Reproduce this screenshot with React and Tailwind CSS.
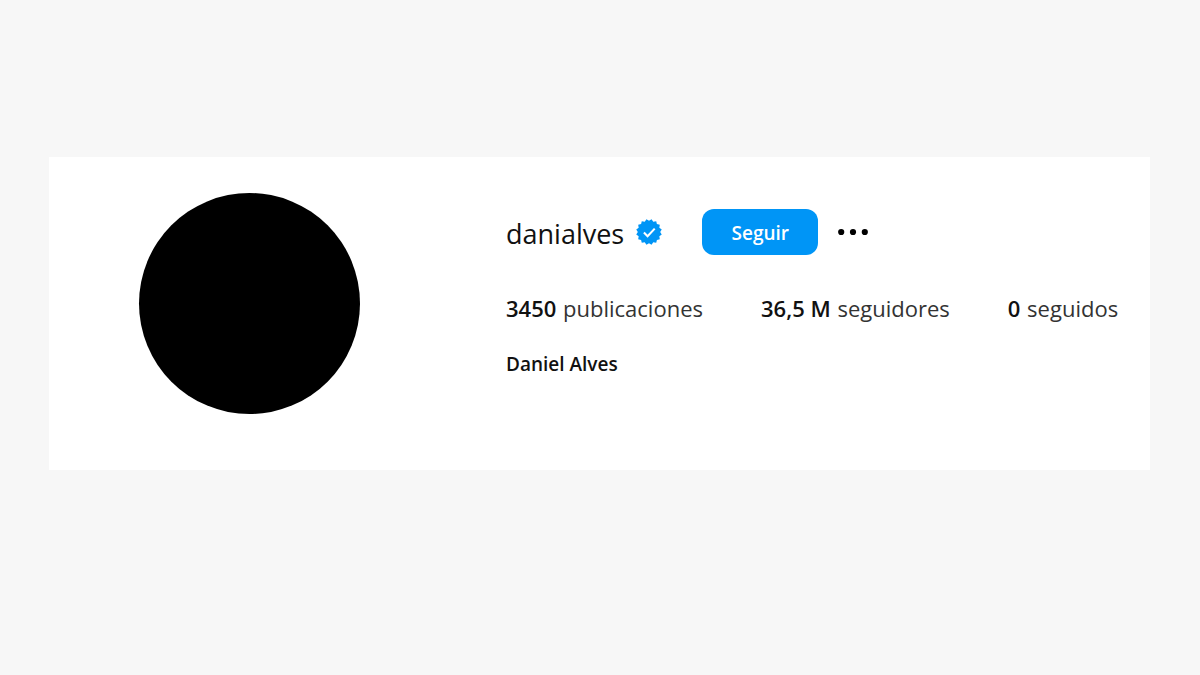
import React from "react";

const stats = [
  { value: "3450", label: "publicaciones" },
  { value: "36,5 M", label: "seguidores" },
  { value: "0", label: "seguidos" },
];

// Sixteen-point seal with a notch at the top; even steps are notches.
const sealPoints = Array.from({ length: 32 }, (_, i) => {
  const angle = (i * Math.PI) / 16;
  const radius = i % 2 === 0 ? 17.2 : 20;
  return `${(20 + radius * Math.sin(angle)).toFixed(2)},${(20 - radius * Math.cos(angle)).toFixed(2)}`;
}).join(" ");

function VerifiedBadge() {
  return (
    <svg
      className="ml-3 size-[26px] shrink-0"
      viewBox="0 0 40 40"
      role="img"
      aria-label="Verificado"
    >
      <polygon points={sealPoints} fill="#0095f6" />
      <path d="m12.2 20.8 5.6 5.6 11-11.6" fill="none" stroke="#fff" strokeWidth="3.2" />
    </svg>
  );
}

function MoreIcon() {
  return (
    <svg className="h-2 w-[30px]" viewBox="0 0 30 8" fill="#000" aria-hidden="true">
      <circle cx="3.2" cy="4" r="3.1" />
      <circle cx="15" cy="4" r="3.1" />
      <circle cx="26.8" cy="4" r="3.1" />
    </svg>
  );
}

export default function App() {
  return (
    <div className="min-h-screen bg-[#f7f7f7] pt-[157px] pr-[50px] pb-[157px] pl-[49px] font-['Open_Sans','Noto_Sans',sans-serif]">
      <main className="flex bg-white pt-9 pb-14 pl-[90px]">
        <div className="size-[221px] shrink-0 rounded-full bg-black" />
        <section className="ml-[146px] flex min-w-0 flex-col items-start pt-4">
          <div className="flex h-[46px] items-center">
            <h1 className="pt-[3px] text-[27px] leading-9 text-[#111]">danialves</h1>
            <VerifiedBadge />
            <button
              type="button"
              className="ml-10 h-[46px] w-[116px] rounded-xl bg-[#0095f6] pt-0.5 text-[19px] font-semibold text-white"
            >
              Seguir
            </button>
            <button
              type="button"
              aria-label="Más opciones"
              className="ml-5 flex h-[46px] items-center"
            >
              <MoreIcon />
            </button>
          </div>
          <ul className="mt-[37px] flex gap-[58px] text-[22px] leading-8 whitespace-nowrap text-[#333]">
            {stats.map(({ value, label }) => (
              <li key={label}>
                <span className="mr-px font-semibold text-[#111]">{value}</span> {label}
              </li>
            ))}
          </ul>
          <p className="mt-[26px] text-[19px] leading-7 font-semibold text-[#111]">Daniel Alves</p>
        </section>
      </main>
    </div>
  );
}
